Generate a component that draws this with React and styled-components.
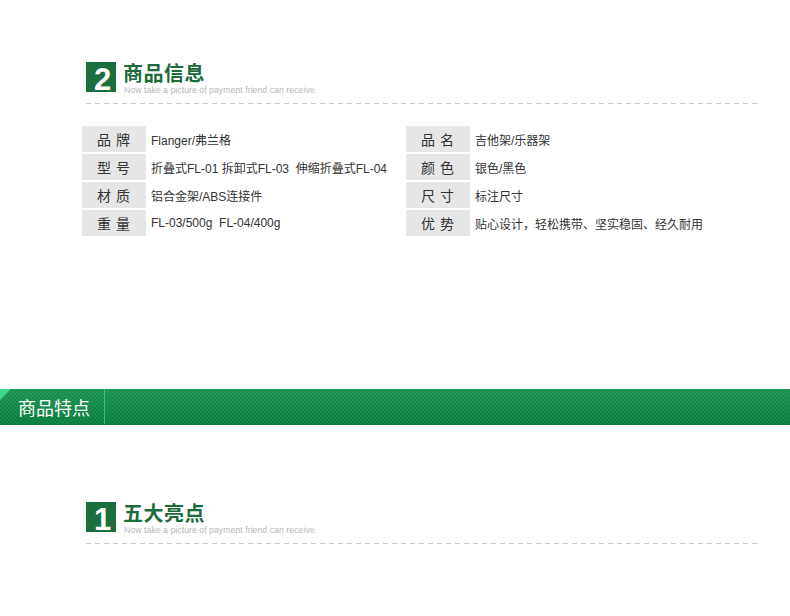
import styled, { createGlobalStyle } from 'styled-components';

const GlobalStyle = createGlobalStyle`
  html, body {
    margin: 0;
    padding: 0;
    background: #ffffff;
  }
  body {
    font-family: 'Liberation Sans', 'Noto Sans CJK SC', sans-serif;
    color: #333333;
  }
`;

const specs = [
  ['品 牌', 'Flanger/弗兰格', '品 名', '吉他架/乐器架'],
  ['型 号', '折叠式FL-01 拆卸式FL-03  伸缩折叠式FL-04', '颜 色', '银色/黑色'],
  ['材 质', '铝合金架/ABS连接件', '尺 寸', '标注尺寸'],
  ['重 量', 'FL-03/500g  FL-04/400g', '优 势', '贴心设计，轻松携带、坚实稳固、经久耐用'],
];

const Heading = ({ num, title }) => (
  <HeadingWrap>
    <HeadRow>
      <NumBox>
        <Num>{num}</Num>
      </NumBox>
      <TitleGroup>
        <Title>{title}</Title>
        <Sub>Now take a picture of payment friend can receive</Sub>
      </TitleGroup>
    </HeadRow>
    <Dashed />
  </HeadingWrap>
);

const App = () => {
  return (
    <Page>
      <GlobalStyle />
      <Section $top={62}>
        <Heading num='2' title='商品信息' />
        <SpecGrid>
          {specs.map((row) =>
            [0, 2].map((i) => (
              <SpecCell key={row[i]}>
                <Label>{row[i]}</Label>
                <Value>{row[i + 1]}</Value>
              </SpecCell>
            ))
          )}
        </SpecGrid>
      </Section>

      <Banner>
        <Corner />
        <BannerTitle>商品特点</BannerTitle>
        <BannerDivider />
      </Banner>

      <Section $top={77}>
        <Heading num='1' title='五大亮点' />
      </Section>
    </Page>
  );
};

export default App;

const Page = styled.div`
  width: 790px;
  height: 616px;
  overflow: hidden;
  background: #fff;
`;

const Section = styled.section`
  padding: ${(p) => p.$top}px 30px 0 82px;
`;

const HeadingWrap = styled.div`
  margin-left: 4px;
`;

const HeadRow = styled.div`
  display: flex;
  align-items: flex-start;
`;

const NumBox = styled.div`
  width: 30px;
  height: 30px;
  background: #1b6e3d;
  display: flex;
  align-items: flex-end;
  padding-left: 8px;
  box-sizing: border-box;
  flex-shrink: 0;
`;

const Num = styled.span`
  font-family: 'Liberation Sans', Arial, sans-serif;
  font-weight: bold;
  font-size: 31px;
  line-height: 24px;
  color: #ffffff;
`;

const TitleGroup = styled.div`
  display: flex;
  flex-direction: column;
  margin-left: 7px;
`;

const Title = styled.div`
  font-family: 'Noto Sans CJK SC', sans-serif;
  font-size: 20px;
  font-weight: bold;
  line-height: 22px;
  color: #1c6b3b;
  letter-spacing: 0.5px;
`;

const Sub = styled.div`
  font-family: 'Liberation Sans', Arial, sans-serif;
  font-size: 8.8px;
  line-height: 10px;
  margin-top: 1px;
  color: #b8b8b8;
  margin-left: 1px;
`;

const Dashed = styled.div`
  height: 1px;
  margin-top: 8px;
  background-image: repeating-linear-gradient(
    to right,
    #cccccc 0 5px,
    transparent 5px 9px
  );
`;

const SpecGrid = styled.div`
  display: grid;
  grid-template-columns: 324px 324px;
  row-gap: 2px;
  margin-top: 22px;
`;

const SpecCell = styled.div`
  display: flex;
  align-items: center;
  height: 26px;
`;

const Label = styled.div`
  width: 64px;
  height: 100%;
  background: #e6e6e6;
  display: flex;
  align-items: center;
  justify-content: center;
  font-family: 'Noto Sans CJK SC', sans-serif;
  font-size: 14px;
  color: #333;
  white-space: pre;
  letter-spacing: 1px;
`;

const Value = styled.div`
  padding-left: 5px;
  font-family: 'Liberation Sans', 'Noto Sans CJK SC', sans-serif;
  font-size: 12px;
  color: #333;
  white-space: pre;
`;

const Banner = styled.div`
  margin-top: 153px;
  height: 35px;
  position: relative;
  display: flex;
  align-items: center;
  background-color: #0f8a47;
  background-image:
    linear-gradient(to bottom, rgba(255, 255, 255, 0.08), rgba(0, 0, 0, 0.08)),
    repeating-conic-gradient(#12924c 0 25%, #0d8443 0 50%);
  background-size: 100% 100%, 4px 4px;
  border-bottom: 1px solid #0b7a3d;
`;

const Corner = styled.div`
  position: absolute;
  left: 0;
  top: 0;
  width: 0;
  height: 0;
  border-top: 11px solid #3bd88a;
  border-right: 11px solid transparent;
`;

const BannerTitle = styled.div`
  margin-left: 18px;
  font-family: 'Noto Sans CJK SC', sans-serif;
  font-size: 18px;
  color: #ffffff;
  width: 86px;
`;

const BannerDivider = styled.div`
  width: 1px;
  height: 100%;
  background: #2fc46e;
`;
